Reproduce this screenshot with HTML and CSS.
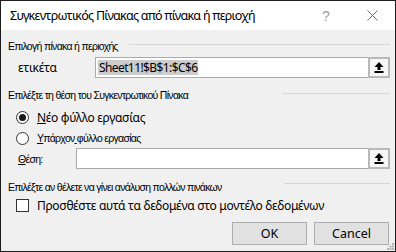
FILE: index.html
```html
<!DOCTYPE html>
<html>
<head>
<meta charset="utf-8">
<link rel="stylesheet" href="styles.css">
</head>
<body>
<div class="win">
  <div class="titlebar">
    <span class="title">Συγκεντρωτικός Πίνακας από πίνακα ή περιοχή</span>
    <span class="tb-btn help">?</span>
    <span class="tb-btn close"><svg width="11" height="11" viewBox="0 0 11 11"><path d="M0.5 0.5L10.5 10.5M10.5 0.5L0.5 10.5" stroke="#6b6b6b" stroke-width="1" fill="none"/></svg></span>
  </div>
  <div class="content">
    <div class="section s1"><span class="sec-label">Επιλογή πίνακα ή περιοχής</span><span class="rule r1"></span></div>
    <div class="field f1">
      <span class="field-label big">ετικέτα</span>
      <div class="input in1"><span class="sel">Sheet11!$B$1:$C$6</span>
        <span class="pick"><svg width="10" height="11" viewBox="0 0 10 11"><path d="M5 0L9.5 5H6.5V8H3.5V5H0.5Z" fill="#000"/><rect x="0.5" y="9" width="9" height="2" fill="#000"/></svg></span>
      </div>
    </div>
    <div class="section s2"><span class="sec-label">Επιλέξτε τη θέση του Συγκεντρωτικού Πίνακα</span><span class="rule r2"></span></div>
    <div class="option o1"><span class="radio checked"></span><span class="opt-label big"><u>Ν</u>έο φύλλο εργασίας</span></div>
    <div class="option o2"><span class="radio"></span><span class="opt-label small"><u>Υ</u>πάρχον<u> </u>φύλλο εργασίας</span></div>
    <div class="field f2">
      <span class="field-label small"><u>Θ</u>έση:</span>
      <div class="input in2">
        <span class="pick"><svg width="10" height="11" viewBox="0 0 10 11"><path d="M5 0L9.5 5H6.5V8H3.5V5H0.5Z" fill="#000"/><rect x="0.5" y="9" width="9" height="2" fill="#000"/></svg></span>
      </div>
    </div>
    <div class="section s3"><span class="sec-label">Επιλέξτε αν θέλετε να γίνει ανάλυση πολλών πινάκων</span><span class="rule r3"></span></div>
    <div class="option o3"><span class="check"></span><span class="opt-label big">Προσθέστε αυτά τα δεδομένα στο μοντέλο δεδομένων</span></div>
    <div class="buttons">
      <span class="btn">OK</span>
      <span class="btn">Cancel</span>
    </div>
  </div>
  <svg class="grip" width="7" height="7" viewBox="0 0 7 7">
    <rect x="5" y="0" width="2" height="2" fill="#b4b4b4"/>
    <rect x="2.5" y="2.5" width="2" height="2" fill="#b4b4b4"/>
    <rect x="5" y="2.5" width="2" height="2" fill="#b4b4b4"/>
    <rect x="0" y="5" width="2" height="2" fill="#b4b4b4"/>
    <rect x="2.5" y="5" width="2" height="2" fill="#b4b4b4"/>
    <rect x="5" y="5" width="2" height="2" fill="#b4b4b4"/>
  </svg>
</div>
</body>
</html>
```
FILE: styles.css
```css
* { box-sizing: border-box; }
html, body { margin: 0; padding: 0; }
body { width: 396px; height: 252px; overflow: hidden; font-family: "Noto Sans", sans-serif; color: #000; }
.win { position: relative; width: 396px; height: 252px; border: 1px solid #1c1c1c; display: flex; flex-direction: column; background: #f0f0f0; }
.titlebar { height: 29px; background: #fff; display: flex; align-items: center; padding-left: 9px; }
.title { font-size: 12.5px; letter-spacing: -0.75px; flex: 1; white-space: nowrap; }
.tb-btn { width: 46px; height: 29px; display: flex; align-items: center; justify-content: center; }
.help { color: #9a9a9a; font-size: 14px; font-family: "Liberation Sans", sans-serif; }
.content { flex: 1; padding: 10px 5px 0 7px; display: flex; flex-direction: column; }
.section { height: 12px; display: flex; align-items: center; white-space: nowrap; }
.sec-label, .small { font-family: "Liberation Sans", sans-serif; font-size: 10.5px; letter-spacing: -0.7px; }
.rule { height: 1px; background: #d7d7d7; margin-left: auto; align-self: flex-start; }
.r1 { width: 261px; margin-top: 4px; }
.r2 { width: 108px; margin-top: 4px; }
.r3 { width: 106px; margin-top: 2px; }
.s2 { margin-top: 11px; }
.s3 { margin-top: 12px; }
.big { font-size: 12px; letter-spacing: -0.3px; }
.field { display: flex; align-items: center; height: 21px; padding-left: 10px; }
.f1 { margin-top: 5px; }
.f2 { margin-top: 3px; }
.field-label { flex: 1; }
.input { height: 21px; border: 1px solid #ababab; background: #fff; display: flex; align-items: center; }
.in1 { width: 295px; padding-left: 2px; }
.in2 { width: 314px; justify-content: flex-end; }
.sel { background: #cccccc; font-size: 12px; letter-spacing: -0.6px; line-height: 15px; padding: 0 1px; }
.pick { margin-left: auto; width: 22px; height: 21px; margin-right: -1px; border: 2px solid #b9b9b9; background: #f7f7f7; display: flex; align-items: center; justify-content: center; }
.option { display: flex; align-items: center; height: 14px; padding-left: 8px; white-space: nowrap; }
.o1 { margin-top: 9px; }
.o2 { margin-top: 7px; }
.o3 { margin-top: 5px; }
.radio { width: 13px; height: 13px; border: 1px solid #333; border-radius: 50%; background: #fff; margin-right: 8px; display: flex; align-items: center; justify-content: center; }
.radio.checked::after { content: ""; width: 7px; height: 7px; border-radius: 50%; background: #1a1a1a; }
.check { width: 13px; height: 13px; border: 1px solid #333; background: #fff; margin-right: 8px; }
.opt-label u { text-decoration-thickness: 1px; }
.buttons { display: flex; justify-content: flex-end; gap: 7px; margin-top: 10px; padding-right: 1px; }
.btn { width: 75px; height: 23px; border: 1px solid #adadad; background: #e1e1e1; font-size: 12.5px; display: flex; align-items: center; justify-content: center; }
.grip { position: absolute; right: 1px; bottom: 1px; }
```
